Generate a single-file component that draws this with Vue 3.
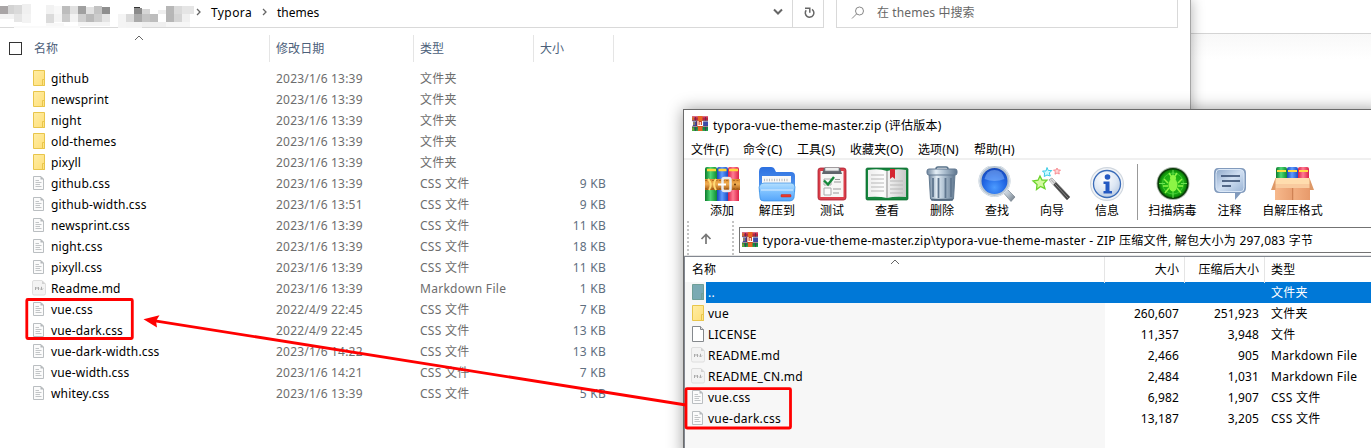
<script setup>
const files = [
  ['folder', 'github', '2023/1/6 13:39', '文件夹', ''],
  ['folder', 'newsprint', '2023/1/6 13:39', '文件夹', ''],
  ['folder', 'night', '2023/1/6 13:39', '文件夹', ''],
  ['folder', 'old-themes', '2023/1/6 13:39', '文件夹', ''],
  ['folder', 'pixyll', '2023/1/6 13:39', '文件夹', ''],
  ['css', 'github.css', '2023/1/6 13:39', 'CSS 文件', '9 KB'],
  ['css', 'github-width.css', '2023/1/6 13:51', 'CSS 文件', '9 KB'],
  ['css', 'newsprint.css', '2023/1/6 13:39', 'CSS 文件', '11 KB'],
  ['css', 'night.css', '2023/1/6 13:39', 'CSS 文件', '18 KB'],
  ['css', 'pixyll.css', '2023/1/6 13:39', 'CSS 文件', '11 KB'],
  ['md', 'Readme.md', '2023/1/6 13:39', 'Markdown File', '1 KB'],
  ['css', 'vue.css', '2022/4/9 22:45', 'CSS 文件', '7 KB'],
  ['css', 'vue-dark.css', '2022/4/9 22:45', 'CSS 文件', '13 KB'],
  ['css', 'vue-dark-width.css', '2023/1/6 14:22', 'CSS 文件', '13 KB'],
  ['css', 'vue-width.css', '2023/1/6 14:21', 'CSS 文件', '7 KB'],
  ['css', 'whitey.css', '2023/1/6 13:39', 'CSS 文件', '5 KB'],
]
const archive = [
  ['up', '..', '', '', '文件夹'],
  ['folder', 'vue', '260,607', '251,923', '文件夹'],
  ['blank', 'LICENSE', '11,357', '3,948', '文件'],
  ['md', 'README.md', '2,466', '905', 'Markdown File'],
  ['md', 'README_CN.md', '2,484', '1,031', 'Markdown File'],
  ['css', 'vue.css', '6,982', '1,907', 'CSS 文件'],
  ['css', 'vue-dark.css', '13,187', '3,205', 'CSS 文件'],
]
const menus = ['文件(F)', '命令(C)', '工具(S)', '收藏夹(O)', '选项(N)', '帮助(H)']
const tools = [
  ['add', '添加'], ['extract', '解压到'], ['test', '测试'], ['view', '查看'],
  ['delete', '删除'], ['find', '查找'], ['wizard', '向导'], ['info', '信息'],
]
const tools2 = [['virus', '扫描病毒'], ['comment', '注释'], ['sfx', '自解压格式']]
// x, y, width, height, fill
const mosaic = [
  [0, 6, 8, 8, '#a9a5a6'], [8, 5, 6, 9, '#d3d3d3'], [14, 5, 8, 9, '#dadada'], [22, 4, 9, 10, '#f0f0f0'],
  [0, 14, 14, 5, '#f3f3f3'], [14, 14, 8, 8, '#e6e6e6'], [22, 14, 9, 9, '#f3f3f3'],
  [46, 5, 8, 9, '#f2f2f2'], [54, 6, 8, 8, '#f8f8f8'], [62, 6, 8, 8, '#bdbdbd'], [70, 6, 8, 8, '#e1e1e1'],
  [78, 6, 8, 8, '#a0a0a0'], [86, 7, 8, 7, '#e2e2e2'], [94, 6, 8, 8, '#c3c3c3'], [102, 7, 8, 7, '#8e8e8e'],
  [46, 14, 8, 9, '#dbdbdb'], [54, 14, 8, 8, '#f4f4f4'], [62, 14, 8, 8, '#cbcbcb'], [70, 14, 8, 8, '#f2f2f2'],
  [78, 14, 8, 8, '#cfcfcf'], [86, 14, 8, 8, '#b9b9b9'], [94, 14, 8, 8, '#cccccc'], [102, 14, 8, 8, '#e4e4e4'],
  [134, 8, 8, 6, '#8b8b8b'], [142, 9, 8, 5, '#d6d6d6'], [158, 10, 8, 4, '#eeeeee'], [166, 6, 8, 8, '#b7b7b7'],
  [174, 6, 8, 8, '#dadada'], [182, 6, 12, 8, '#e5e5e5'],
  [118, 14, 8, 14, '#f4f4f4'], [126, 14, 8, 8, '#dadada'], [134, 14, 8, 8, '#aaa'], [142, 14, 8, 8, '#c4c4c4'],
  [150, 14, 8, 8, '#bdbdbd'], [166, 14, 8, 8, '#b6b6b6'], [174, 14, 8, 8, '#d4d4d4'], [182, 14, 8, 8, '#f0f0f0'],
  [46, 23, 18, 4, '#f8f8f8'], [78, 22, 32, 4, '#f4f4f4'], [126, 22, 16, 6, '#f3f3f3'], [142, 22, 24, 5, '#efefef'], [166, 22, 24, 5, '#f6f6f6'],
  [134, 7, 6, 1, '#333'], [14, 26, 66, 2, '#fafafa'],
]
</script>

<template>
  <div class="desktop">
    <svg class="defs" width="0" height="0">
      <defs>
        <linearGradient id="gFold" x1="0" y1="0" x2="1" y2="1"><stop offset="0" stop-color="#ffeda5" /><stop offset="1" stop-color="#ffdf78" /></linearGradient>
        <linearGradient id="gGreen"><stop offset="0" stop-color="#0c7a2b" /><stop offset=".45" stop-color="#4fd873" /><stop offset="1" stop-color="#0d8a32" /></linearGradient>
        <linearGradient id="gBlue"><stop offset="0" stop-color="#1747b8" /><stop offset=".45" stop-color="#5f9bff" /><stop offset="1" stop-color="#1a4cc4" /></linearGradient>
        <linearGradient id="gRed"><stop offset="0" stop-color="#d8204a" /><stop offset=".45" stop-color="#ff7c92" /><stop offset="1" stop-color="#dc2348" /></linearGradient>
        <linearGradient id="gBelt" x2="0" y2="1"><stop offset="0" stop-color="#dd8a2c" /><stop offset=".45" stop-color="#f0ae52" /><stop offset="1" stop-color="#a85a12" /></linearGradient>
        <linearGradient id="gBlueBack" x2="0" y2="1"><stop offset="0" stop-color="#2c70e0" /><stop offset="1" stop-color="#5b9df2" /></linearGradient>
        <linearGradient id="gBlueFront" x2="0" y2="1"><stop offset="0" stop-color="#b5e0ff" /><stop offset=".5" stop-color="#7cc0ff" /><stop offset="1" stop-color="#55a5fa" /></linearGradient>
        <linearGradient id="gCan"><stop offset="0" stop-color="#6e859d" /><stop offset=".3" stop-color="#e4eef6" /><stop offset=".6" stop-color="#a9bccd" /><stop offset="1" stop-color="#5f768e" /></linearGradient>
        <radialGradient id="gLens" cx=".5" cy=".72" r=".7"><stop offset="0" stop-color="#4c9bff" /><stop offset=".55" stop-color="#2267e4" /><stop offset="1" stop-color="#1443b4" /></radialGradient>
        <linearGradient id="gMetal" x2="1" y2="1"><stop offset="0" stop-color="#f6f9fb" /><stop offset=".5" stop-color="#bcc7d1" /><stop offset="1" stop-color="#66727e" /></linearGradient>
        <radialGradient id="gInfo" cx=".4" cy=".3" r=".75"><stop offset="0" stop-color="#ffffff" /><stop offset=".6" stop-color="#dde7f4" /><stop offset="1" stop-color="#b7c8e0" /></radialGradient>
        <radialGradient id="gScan"><stop offset="0" stop-color="#2cc41c" /><stop offset=".75" stop-color="#18a810" /><stop offset="1" stop-color="#067005" /></radialGradient>
        <linearGradient id="gBubble" x2="1" y2="1"><stop offset="0" stop-color="#8fa9ca" /><stop offset=".5" stop-color="#d0dff2" /><stop offset="1" stop-color="#9ab4d5" /></linearGradient>
        <linearGradient id="gBox"><stop offset="0" stop-color="#f7b98c" /><stop offset=".49" stop-color="#eaa173" /><stop offset=".5" stop-color="#cf8254" /><stop offset=".54" stop-color="#f2ae80" /><stop offset="1" stop-color="#e79a6b" /></linearGradient>
        <linearGradient id="gPage"><stop offset="0" stop-color="#ededed" /><stop offset=".4" stop-color="#fdfdfd" /><stop offset="1" stop-color="#c8c8c8" /></linearGradient>

        <symbol id="folder" viewBox="0 0 16 16"><path d="M1.5.5h11v15h-11z" fill="url(#gFold)" stroke="#e8c54b" /><path d="M10.5 15.500V9.500h2v6z" fill="#ffe484" stroke="#e8c54b" /></symbol>
        <symbol id="up" viewBox="0 0 16 16"><path d="M1.5.5h11v15h-11z" fill="#7aaab3" stroke="#6f9f97" /><path d="M10.5 15.500V9.500h2v6z" fill="#79a9a9" stroke="#6f9f97" /></symbol>
        <symbol id="css" viewBox="0 0 16 16"><path d="M1.500 1.500h7.500l2.500 2.500v10.500h-10z" fill="#fbfbfb" stroke="#babec1" /><path d="M8.500 1v3.500H12z" fill="#b4b8bb" /><path d="M3.500 5.500H7M3.500 7.500H9.500M3.500 9.500H8M3.500 11.500H9.500" stroke="#c2c5c7" /></symbol>
        <symbol id="blank" viewBox="0 0 16 16"><path d="M1.500.5h8l3 3v12h-11z" fill="#fff" stroke="#85898d" /><path d="M9.500.5v3h3" fill="#ddd" stroke="#85898d" /></symbol>
        <symbol id="md" viewBox="0 0 16 16"><path d="M2 .5h8L13.500 4v9.500a1.500 1.500 0 0 1-1.500 1.500H2A1.500 1.500 0 0 1 .5 13.500V2A1.500 1.500 0 0 1 2 .5z" fill="#f3f3f3" stroke="#dedede" /><path d="M10 .5V4h3.500z" fill="#d2d2d2" /><path d="M3.500 10V7l1.500 1.500L6.500 7v3M9.500 6.800v3M8 8.500L9.500 10 11 8.500" fill="none" stroke="#aaa" /></symbol>
        <symbol id="rar" viewBox="0 0 16 16">
          <path d="M0 .5h16v4H0z" fill="#b92341" /><path d="M0 .5h16v1.200H0z" fill="#d63f60" /><path d="M1 5.500h15v4.500H1z" fill="#3c4ba8" /><path d="M0 11h16v4H0z" fill="#108647" /><path d="M0 13.700h16v1.300H0z" fill="#1fa94a" />
          <path d="M0 4.700h16M0 10.300h16" stroke="#51333d" stroke-width=".7" /><path d="M1 1v3M2 6v3M1 11.500v3" stroke="#ddae29" /><path d="M3.500 1v3.500M13.500 1v3.500M4.500 5v5M3.500 11v4M13.500 11v4" stroke="#5b2856" stroke-width=".8" />
          <path d="M5.800 0h4.700v15H5.800z" fill="#e66923" /><path d="M5 5h6v5.500H5z" fill="#cb3d19" /><path d="M6 5v4.500h4.500V5M8.200 6v3" fill="none" stroke="#fff" stroke-width="1.200" />
        </symbol>
        <symbol id="add" viewBox="0 0 44 38">
          <path d="M5 3q0-2 2-2h8q2 0 2 2v32H5z" fill="url(#gGreen)" /><path d="M17 3q0-2 2-2h7q2 0 2 2v32H17z" fill="url(#gBlue)" /><path d="M28 3q0-2 2-2h7q2 0 2 2v32H28z" fill="url(#gRed)" />
          <path d="M7 4h9M18.500 4h8M29 4h9" stroke="#ffd73a" stroke-width="2.500" />
          <path d="M5 13h35v11H5z" fill="url(#gBelt)" /><path d="M5 14.500h35M5 22.500h35" stroke="#9d5c18" stroke-dasharray="2 1.500" stroke-width=".7" />
          <path d="M8 13q5 5 1 11M16 13q-4 5 0 11" fill="none" stroke="#ffdc76" stroke-width="2" /><rect x="22.500" y="12" width="8" height="13" rx="2" fill="none" stroke="#e9ecee" stroke-width="2.500" /><path d="M18 18.500h8" stroke="#fff" stroke-width="2" /><circle cx="35" cy="18.500" r="1" fill="#653407" />
        </symbol>
        <symbol id="extract" viewBox="0 0 44 38">
          <path d="M4 6Q4 1 8 1h8q3 0 4 3l1 2h15q4 0 4 4v16H4z" fill="url(#gBlueBack)" /><path d="M7 10h29v11H7z" fill="#f8f8f8" /><path d="M9 14h25" stroke="#bbb" stroke-width="2.500" stroke-dasharray="1 1.500" />
          <path d="M4 21q1-4 5-4h27q4 0 4 4l-1 11q-1 3-4 3H9q-4 0-4-3z" fill="url(#gBlueFront)" stroke="#378ee2" stroke-width=".7" /><path d="M6 24h32" stroke="#fff" opacity=".35" stroke-width="2" /><rect x="26" y="28.500" width="10" height="2.500" rx=".6" fill="#eb3828" stroke="#be2a24" stroke-width=".5" />
        </symbol>
        <symbol id="test" viewBox="0 0 44 38">
          <rect x="8" y="2" width="28" height="32" rx="2.500" fill="#db3e49" stroke="#aa1e30" stroke-width=".8" /><path d="M10.500 5h23v26h-23z" fill="#f7f7f5" /><path d="M14 2h16l2 6H12z" fill="#60656b" /><path d="M15 1.500h14v3.500H15z" fill="#eee" stroke="#828689" stroke-width=".7" />
          <path d="M14 13h7v6h-7zM14 22h7v7h-7z" fill="#fbfbfb" stroke="#aaa" /><path d="M14 14.500l4 4 6-7.500" fill="none" stroke="#16883a" stroke-width="2.400" /><path d="M24 16h7M25 13.500h5M23 23h8M23 27h6" stroke="#999" stroke-width="1.200" />
        </symbol>
        <symbol id="view" viewBox="0 0 44 38">
          <rect x="1" y="2" width="42" height="32" rx="1.500" fill="#15853d" stroke="#09692b" stroke-width=".7" /><path d="M3 4q11-2 19 1 9-3 19-1v27q-11-1-19 1-8-2-19-1z" fill="url(#gPage)" /><path d="M22 5v27" stroke="#858585" />
          <path d="M6 9h13M6 13h13M6 17h13M6 21h13M6 25h13M25 15h13M25 19h13M25 23h13M25 27h13" stroke="#b8b8b8" stroke-width="1.200" /><path d="M25 3h5v10l-2.500-2-2.500 2z" fill="#d52632" />
        </symbol>
        <symbol id="delete" viewBox="0 0 44 38">
          <path d="M16 3q0-2 2-2h8q2 0 2 2" fill="none" stroke="#567088" stroke-width="1.500" /><path d="M9 8h26l-1.500 25q-1 1.500-3 1.500h-17q-2 0-3-1.500z" fill="url(#gCan)" stroke="#647b91" /><rect x="7" y="3" width="30" height="6" rx="2" fill="url(#gCan)" stroke="#627991" /><path d="M13 12v19M18.500 12v20M25.500 12v20M31 12v19" stroke="#60778f" stroke-width="1.800" /><path d="M11 33.500h22" stroke="#53687d" stroke-width="1.500" />
        </symbol>
        <symbol id="find" viewBox="0 0 44 38">
          <path d="M26 24l4-3 10 10-4 4.500z" fill="url(#gMetal)" stroke="#697581" stroke-width=".6" /><circle cx="19.500" cy="15" r="14.500" fill="url(#gLens)" stroke="#b8c5d2" stroke-width="3" /><circle cx="19.500" cy="15" r="15.500" fill="none" stroke="#dfe6ed" /><path d="M9.500 13q2-9 10-9t10 9q-10 4-20 0z" fill="#98c3ff" opacity=".45" />
        </symbol>
        <symbol id="wizard" viewBox="0 0 44 38">
          <path d="M19 14l3-2 18 19-3 3z" fill="#424242" stroke="#777" stroke-width=".7" /><path d="M19 14l3-2 4 4-3 3z" fill="#ddd" /><path d="M21 13.500l17 18.500" stroke="#999" stroke-width=".8" />
          <path d="M10 10l2 4 5 .2-3.500 3.500 1.500 5-4.500-2.200-4 3 .5-5L3 15l5-.8z" fill="#d3fa9f" stroke="#6bd32b" stroke-width="1.300" /><path d="M17 1.500l1.300 3h3.500l-2.500 2.500 1 3-3.300-1-2.700 1.500.2-3.500L12.500 5H16z" fill="#c9faff" stroke="#3ccbe6" /><path d="M27 2l1 2h2.500l-1.700 1.800.5 2.200-2.300-1L25 8.200l.3-2.400L23.500 4H26z" fill="#ffd6d6" stroke="#f6777d" stroke-width=".8" />
        </symbol>
        <symbol id="info" viewBox="0 0 44 38">
          <circle cx="22" cy="18" r="17" fill="#d0d7df" /><circle cx="22" cy="18" r="15.800" fill="#f3f5f8" /><circle cx="22" cy="18" r="13.500" fill="url(#gInfo)" stroke="#396bb8" stroke-width="1.300" /><circle cx="22.500" cy="11" r="2.800" fill="#2459c2" /><path d="M18.500 15.500h6v9.500H27v2.500h-8.500V25H20.500v-7h-2z" fill="#2459c2" />
        </symbol>
        <symbol id="virus" viewBox="0 0 44 38">
          <circle cx="22" cy="17.500" r="16.500" fill="#aab3aa" /><circle cx="22" cy="17.500" r="14.800" fill="url(#gScan)" stroke="#0a3c08" stroke-width="1.600" /><circle cx="22" cy="17.500" r="10.500" fill="none" stroke="#4bd13c" stroke-width=".8" /><path d="M22 4v6M22 25v7M8 17.500h6M30 17.500h6" stroke="#6be150" />
          <ellipse cx="22" cy="19" rx="4.500" ry="6.500" fill="#8cf545" /><circle cx="22" cy="12" r="3" fill="#8cf545" /><path d="M17 17l-4-4M27 17l4-4M17 20h-5M27 20h5M18 22l-4 5M26 22l4 5M20 10l-2-3M24 10l2-3" stroke="#8cf545" stroke-width="1.500" />
        </symbol>
        <symbol id="comment" viewBox="0 0 44 38">
          <path d="M10 2h23q5 0 5 5v15q0 5-5 5l-6 7v-7H11q-5 0-5-5V7q0-5 4-5z" fill="#829bbd" /><path d="M11 3.500h21q4 0 4 4v14q0 4-3 4H12q-4 0-4-4v-14q0-4 3-4z" fill="url(#gBubble)" stroke="#dbe8f7" /><path d="M13 10h19M14 15h18M14 20h9" stroke="#2c4367" stroke-width="1.600" />
        </symbol>
        <symbol id="sfx" viewBox="0 0 44 38">
          <path d="M5 3q0-2 2-2h7q2 0 2 2v12H5z" fill="url(#gGreen)" /><path d="M16 3q0-2 2-2h7q2 0 2 2v12H16z" fill="url(#gBlue)" /><path d="M27 3q0-2 2-2h7q2 0 2 2v12H27z" fill="url(#gRed)" /><path d="M6 5h9M17 5h9M28 5h9" stroke="#ffdc41" stroke-width="1.800" />
          <path d="M4 13h35v21H4z" fill="url(#gBox)" /><path d="M4 12h35v10H4z" fill="#f9cb9f" /><path d="M5 12h33l2 6H3z" fill="#ffddae" /><path d="M0 24l4.500-12v12zM43 24l-4.500-12v12z" fill="#dd9867" />
        </symbol>
      </defs>
    </svg>

    <div class="behind"></div>

    <section class="explorer">
      <header class="address-row">
        <div class="address">
          <svg class="mosaic" width="200" height="28"><rect v-for="(m, i) in mosaic" :key="i" :x="m[0]" :y="m[1]" :width="m[2]" :height="m[3]" :fill="m[4]" /></svg>
          <svg class="crumb" width="6" height="8"><path d="M1 1l3 3-3 3" /></svg>
          <span class="typora">Typora</span>
          <svg class="crumb" width="6" height="8"><path d="M1 1l3 3-3 3" /></svg>
          <span class="themes">themes</span>
          <svg class="drop" width="12" height="8"><path d="M2 1.500l4 4 4-4" /></svg>
        </div>
        <div class="refresh"><svg width="14" height="14"><path d="M10 4.300A4.300 4.300 0 1 1 4.200 5.200M3 3.300h4.800v4.400" /></svg></div>
        <div class="search">
          <svg width="14" height="14"><circle cx="8.500" cy="5" r="4" /><path d="M5.700 7.800L1 12.500" /></svg>
          <span>在 themes 中搜索</span>
        </div>
      </header>
      <div class="cols head">
        <div class="check"><i></i></div>
        <span class="c-name">名称<svg class="sort" width="10" height="6"><path d="M1 5l4-4 4 4" /></svg></span>
        <span>修改日期</span><span>类型</span><span>大小</span>
      </div>
      <div class="file-list">
        <div v-for="f in files" :key="f[1]" class="file">
          <svg class="ico" width="16" height="16"><use :href="'#' + f[0]" /></svg>
          <span class="fname">{{ f[1] }}</span><span class="date">{{ f[2] }}</span><span class="ftype">{{ f[3] }}</span><span class="size">{{ f[4] }}</span>
        </div>
      </div>
    </section>

    <section class="winrar">
      <div class="title"><svg width="16" height="16"><use href="#rar" /></svg><span>typora-vue-theme-master.zip (评估版本)</span></div>
      <nav class="menu"><span v-for="m in menus" :key="m">{{ m }}</span></nav>
      <div class="toolbar">
        <div v-for="t in tools" :key="t[0]" class="tool"><svg width="44" height="38"><use :href="'#' + t[0]" /></svg><span>{{ t[1] }}</span></div>
        <i class="sep"></i>
        <div v-for="t in tools2" :key="t[0]" class="tool" :class="t[0]"><svg width="44" height="38"><use :href="'#' + t[0]" /></svg><span>{{ t[1] }}</span></div>
      </div>
      <div class="path-row">
        <i class="grip"></i>
        <svg class="up-arrow" width="12" height="12"><path d="M6 11V2M1.500 6L6 1.500 10.500 6" /></svg>
        <i class="grip"></i>
        <div class="path"><svg width="16" height="16"><use href="#rar" /></svg><span>typora-vue-theme-master.zip\typora-vue-theme-master - ZIP 压缩文件, 解包大小为 297,083 字节</span></div>
      </div>
      <div class="list">
        <div class="row list-head"><span>名称<svg class="sort" width="10" height="6"><path d="M1 5l4-4 4 4" /></svg></span><span class="num">大小</span><span class="num">压缩后大小</span><span class="kind">类型</span></div>
        <div class="rows">
          <div v-for="(a, i) in archive" :key="a[1]" class="row" :class="{ selected: i === 0 }">
            <span class="entry"><svg width="16" height="16"><use :href="'#' + a[0]" /></svg><b>{{ a[1] }}</b></span>
            <span class="num">{{ a[2] }}</span><span class="num">{{ a[3] }}</span><span class="kind">{{ a[4] }}</span>
          </div>
        </div>
      </div>
    </section>

    <svg class="marks" width="1371" height="448">
      <rect x="26.800" y="299.500" width="105.500" height="39" rx="1" /><rect x="686" y="388.700" width="104.500" height="39.300" rx="1" />
      <path d="M686 405L155 320.800" /><path class="tip" d="M143.500 319.300L159.500 315.300 156 321 157 327.400z" />
    </svg>
  </div>
</template>

<style>
html, body { margin: 0; overflow: hidden; background: #fff; }
</style>

<style scoped>
.desktop { position: relative; width: 1371px; height: 448px; overflow: hidden; background: #fff; color: #000; font: 12px/21px "Noto Sans", "Noto Sans CJK SC", sans-serif; letter-spacing: .1px; white-space: pre; }
.desktop * { box-sizing: border-box; }
svg { display: block; flex: none; overflow: visible; }
.defs { position: absolute; }
.behind { position: absolute; left: 1190px; right: 0; top: 33px; height: 26px; border-top: 1px solid #d4d4d4; background: linear-gradient(#f8f8f8, #fff); }
.explorer { position: absolute; left: 0; top: 0; width: 1191px; height: 448px; background: #fff; border-right: 1px solid #a5a5a5; box-shadow: 1px 0 12px rgba(0, 0, 0, .28); }
.address-row { display: flex; height: 28px; }
.address { width: 793px; display: flex; align-items: center; border: solid #d9d9d9; border-width: 0 1px 1px 0; padding-bottom: 3px; }
.mosaic { width: 196px; align-self: flex-start; }
.crumb path { fill: none; stroke: #666; stroke-width: 1.300; }
.address .typora { width: 60px; padding-left: 9px; letter-spacing: .4px; }
.themes { width: 504px; padding-left: 9px; letter-spacing: 0; }
.drop path { fill: none; stroke: #666; stroke-width: 2; }
.refresh { width: 31px; border: solid #d9d9d9; border-width: 0 1px 1px 0; padding: 5px 0 0 9px; }
.refresh path { fill: none; stroke: #666; stroke-width: 1.500; }
.search { width: 342px; margin-left: 12px; border: solid #d9d9d9; border-width: 0 1px 1px; padding: 0 0 2px 14px; display: flex; align-items: center; gap: 12px; color: #666; }
.search svg { fill: none; stroke: #888; stroke-width: 1; }
.cols { display: grid; grid-template-columns: 33px 237px 144px 120px 80px; height: 27px; margin-top: 7px; line-height: 27px; color: #4c607a; }
.cols span { position: relative; border-right: 1px solid #e5e5e5; padding-left: 6px; }
.cols .c-name { padding-left: 1px; }
.check { padding: 7px 0 0 9px; }
.check i { display: block; width: 13px; height: 13px; border: 1px solid #333; }
.sort { position: absolute; fill: none; stroke: #666; top: 0; left: 101px; }
.file-list { margin-top: 6px; }
.file { display: grid; grid-template-columns: 19px 225px 144px 104px 82px; padding-left: 32px; height: 21px; line-height: 21px; color: #6d6d6d; }
.file .ico { margin-top: 2px; }
.fname { color: #000; letter-spacing: .16px; }
.date { letter-spacing: .2px; }
.ftype { letter-spacing: .28px; }
.size { text-align: right; color: #5f6f80; letter-spacing: .25px; }
.winrar { position: absolute; left: 683px; top: 109px; width: 700px; height: 350px; background: #fff; border: 1px solid #6b6b6b; box-shadow: 0 0 15px rgba(0, 0, 0, .38); }
.title { display: flex; gap: 5px; height: 29px; padding: 6px 0 0 8px; line-height: 19px; letter-spacing: .24px; }
.menu { display: grid; grid-template-columns: 52px 54px 53px 68px 56px 60px; height: 21px; padding-left: 7px; line-height: 22px; border-bottom: 2px solid #f0f0f0; }
.toolbar { display: flex; height: 61px; padding: 6px 0 0 10.500px; }
.tool { width: 55px; display: flex; flex-direction: column; align-items: center; line-height: 18px; }
.tool span { margin-top: -2px; }
.sep { width: 1px; height: 56px; margin: -2px 1.500px 0 2.500px; background: #999; }
.tool.virus { width: 66px; }
.tool.comment { width: 48px; }
.tool.sfx { width: 78px; }
.path-row { display: flex; height: 35px; border-bottom: 1px solid #e4e4e4; }
.grip { width: 2px; margin-left: 3px; background: repeating-linear-gradient(#c4c4c4 0 2px, transparent 2px 4px); }
.up-arrow { margin: 12px 27px 0 11px; width: 12px; fill: none; stroke: #777; stroke-width: 1.700; }
.up-arrow + .grip { margin-left: -7px; }
.path { flex: 1; height: 26px; margin: 6px 0 0 5px; border: 1px solid #737373; display: flex; align-items: center; padding-left: 2px; gap: 4.500px; letter-spacing: .24px; }
.list { border: solid #828790; border-width: 1px 0 0 1px; height: 205px; }
.row { display: grid; grid-template-columns: 420px 80px 80px 1fr; height: 21px; }
.list-head { height: 25px; line-height: 26px; }
.list-head span { position: relative; border-right: 1px solid #e5e5e5; }
.list-head span:first-child { padding-left: 7px; }
.list-head .sort { left: 205px; top: 2px; }
.list-head .kind { border: 0; }
.rows { height: 180px; background: linear-gradient(90deg, #f7f7f7 420px, #fff 420px); }
.num { text-align: right; padding-right: 5px; }
.rows .num { padding-right: 6px; }
.kind { padding-left: 6px; letter-spacing: .28px; }
.entry { display: flex; padding: 2px 0 0 6px; line-height: 17px; }
.entry b { font-weight: 400; padding-left: 1px; letter-spacing: .25px; }
.selected { background: linear-gradient(90deg, #f7f7f7 21px, #0078d7 21px); color: #fff; }
.marks { position: absolute; left: 0; top: 0; fill: none; stroke: #f00; stroke-width: 2.800; }
.tip { fill: #f00; stroke: none; }
</style>
